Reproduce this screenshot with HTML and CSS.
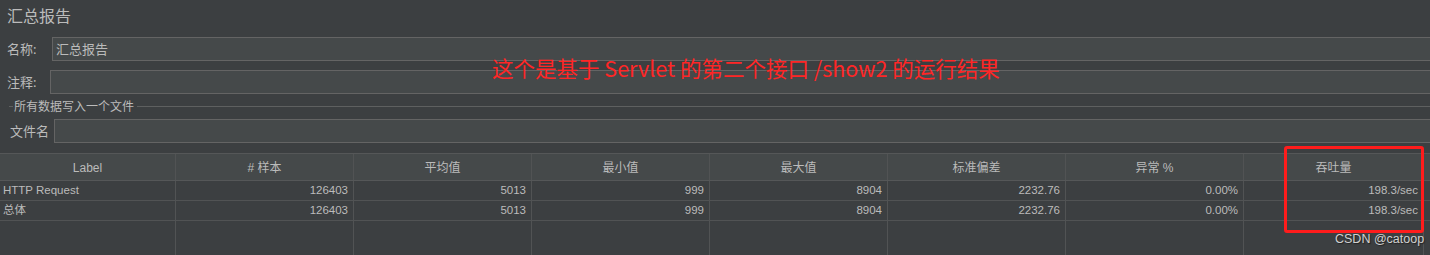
FILE: index.html
```html
<!DOCTYPE html>
<html lang="zh-CN">
<head>
<meta charset="utf-8">
<title>汇总报告</title>
<link rel="stylesheet" href="styles.css">
</head>
<body>
<div class="page">
  <div class="title">汇总报告</div>
  <div class="form-row row-name">
    <span class="label">名称:</span>
    <div class="field">汇总报告</div>
  </div>
  <div class="form-row row-comment">
    <span class="label">注释:</span>
    <div class="field"></div>
  </div>
  <div class="section">
    <span class="section-lead"></span>
    <span class="section-title">所有数据写入一个文件</span>
    <span class="section-line"></span>
  </div>
  <div class="form-row row-file">
    <span class="label">文件名</span>
    <div class="field"></div>
  </div>
  <div class="table">
    <div class="tr head">
      <div class="td">Label</div>
      <div class="td"># 样本</div>
      <div class="td">平均值</div>
      <div class="td">最小值</div>
      <div class="td">最大值</div>
      <div class="td">标准偏差</div>
      <div class="td">异常 %</div>
      <div class="td">吞吐量</div>
      <div class="td rest"></div>
    </div>
    <div class="tr data">
      <div class="td first">HTTP Request</div>
      <div class="td">126403</div>
      <div class="td">5013</div>
      <div class="td">999</div>
      <div class="td">8904</div>
      <div class="td">2232.76</div>
      <div class="td">0.00%</div>
      <div class="td">198.3/sec</div>
      <div class="td rest"></div>
    </div>
    <div class="tr data">
      <div class="td first">总体</div>
      <div class="td">126403</div>
      <div class="td">5013</div>
      <div class="td">999</div>
      <div class="td">8904</div>
      <div class="td">2232.76</div>
      <div class="td">0.00%</div>
      <div class="td">198.3/sec</div>
      <div class="td rest"></div>
    </div>
    <div class="tr filler">
      <div class="td"></div><div class="td"></div><div class="td"></div><div class="td"></div>
      <div class="td"></div><div class="td"></div><div class="td"></div><div class="td"></div>
      <div class="td rest"></div>
    </div>
  </div>
  <div class="note">这个是基于 Servlet 的第二个接口 /show2 的运行结果</div>
  <div class="highlight"></div>
  <div class="watermark">CSDN @catoop</div>
</div>
</body>
</html>
```

FILE: styles.css
```css
html, body {
  margin: 0;
  padding: 0;
  background: #3c3f41;
}
body {
  width: 1430px;
  height: 255px;
  overflow: hidden;
  font-family: "Noto Sans", "Noto Sans CJK SC", sans-serif;
  color: #bbbbbb;
}
.page {
  position: relative;
  width: 1430px;
  height: 255px;
  display: flex;
  flex-direction: column;
}
.title {
  height: 37px;
  box-sizing: border-box;
  padding: 5px 0 0 7px;
  font-size: 16px;
  line-height: 22px;
  color: #bbbbbb;
}
.form-row {
  display: flex;
  align-items: center;
  height: 24px;
  width: 1460px;
}
.row-comment { margin-top: 9px; }
.label {
  font-size: 13px;
  line-height: 24px;
  white-space: nowrap;
}
.row-name .label { padding-left: 7px; width: 45px; }
.row-comment .label { padding-left: 7px; width: 43px; }
.row-file .label { padding-left: 10px; width: 44px; }
.field {
  flex: 1;
  height: 24px;
  box-sizing: border-box;
  border: 1px solid #646464;
  background: #45494a;
  font-size: 13px;
  line-height: 22px;
  padding-left: 3px;
  color: #bbbbbb;
}
.section {
  display: flex;
  align-items: center;
  height: 25px;
}
.section-lead {
  width: 4px;
  height: 1px;
  margin-left: 9px;
  background: #5e6060;
}
.section-title {
  font-size: 12px;
  line-height: 14px;
  padding: 0 3px 0 1px;
}
.section-line {
  flex: 1;
  height: 1px;
  background: #5e6060;
}
.table {
  margin-top: 10px;
  border-top: 1px solid #555758;
  display: flex;
  flex-direction: column;
  flex: 1;
  font-family: "Liberation Sans", "Noto Sans CJK SC", sans-serif;
  font-size: 11.5px;
}
.tr {
  display: grid;
  grid-template-columns: 176px repeat(6, 178px) 180px 1fr;
  box-sizing: border-box;
}
.td {
  box-sizing: border-box;
  border-right: 1px solid #515354;
  white-space: nowrap;
  overflow: hidden;
}
.td.rest { border-right: none; }
.head {
  height: 27px;
  background: #45494a;
  border-bottom: 1px solid #555758;
}
.head .td {
  text-align: center;
  line-height: 28px;
  font-size: 12px;
}
.data {
  height: 20px;
  border-bottom: 1px solid #515354;
}
.data .td {
  text-align: right;
  padding-right: 5px;
  line-height: 19px;
}
.data .td.first {
  text-align: left;
  padding-left: 3px;
  padding-right: 0;
}
.filler {
  flex: 1;
}
.note {
  position: absolute;
  left: 492px;
  top: 55px;
  font-family: "Noto Sans CJK SC", sans-serif;
  font-size: 21.5px;
  line-height: 26px;
  color: #ff2626;
  white-space: nowrap;
}
.highlight {
  position: absolute;
  left: 1284px;
  top: 146px;
  width: 140px;
  height: 87px;
  box-sizing: border-box;
  border: 3px solid #ff1c1c;
  border-radius: 3px;
}
.watermark {
  position: absolute;
  left: 1335px;
  top: 231px;
  font-family: "Liberation Sans", sans-serif;
  font-size: 12.5px;
  line-height: 16px;
  color: #d0d0d0;
  text-shadow: 1px 1px 1px #222;
  white-space: nowrap;
}
```
